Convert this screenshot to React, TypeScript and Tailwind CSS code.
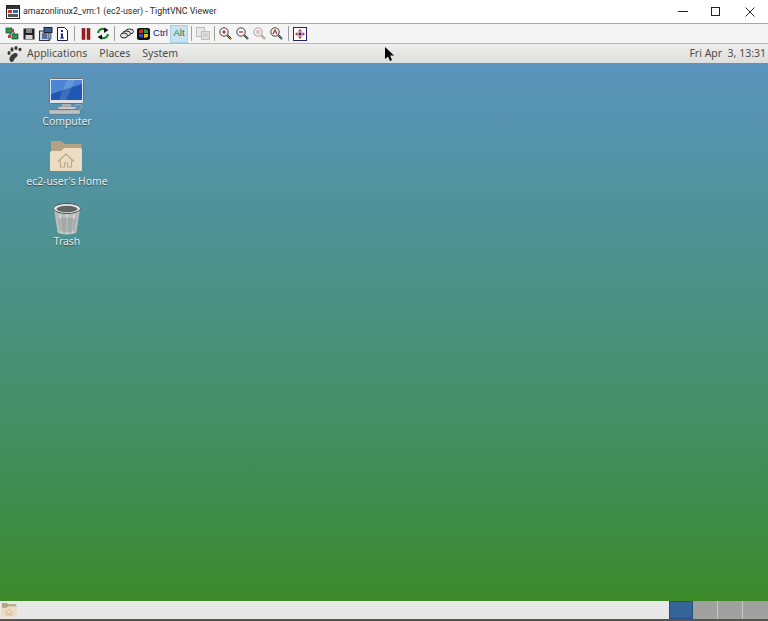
import React from 'react';

const Sep = ({ className = 'mr-[2px]' }: { className?: string }) => (
  <div className={`ml-[3px] h-[15px] w-px bg-[#a0a0a0] ${className}`} />
);

const Tool = ({ children, className = 'w-[17px]' }: { children: React.ReactNode; className?: string }) => (
  <div className={`flex h-[18px] items-center justify-center ${className}`}>{children}</div>
);

const VncIcon = () => (
  <svg width="14" height="14" viewBox="0 0 14 14">
    <rect x="0.5" y="0.5" width="13" height="13" fill="#fff" stroke="#222" />
    <rect x="1" y="1" width="12" height="3" fill="#333" />
    <rect x="2" y="5" width="4" height="3" fill="#c33" />
    <rect x="7" y="5" width="5" height="3" fill="#36a" />
    <rect x="2" y="9" width="10" height="3" fill="#555" />
  </svg>
);

const Connections = () => (
  <svg width="14" height="14" viewBox="0 0 14 14">
    <rect x="1" y="1" width="6" height="5" fill="#2c9a3c" stroke="#145" strokeWidth="0.7" />
    <rect x="7" y="7" width="6" height="5" fill="#2c9a3c" stroke="#145" strokeWidth="0.7" />
    <rect x="6" y="2" width="3" height="3" fill="#d33" />
    <rect x="3" y="8" width="3" height="3" fill="#d33" />
    <path d="M9 5v2M5 6v2" stroke="#222" />
  </svg>
);

const Save = () => (
  <svg width="12" height="12" viewBox="0 0 12 12">
    <rect x="0.5" y="0.5" width="11" height="11" fill="#222" />
    <rect x="3" y="1" width="6" height="4" fill="#888" />
    <rect x="2.5" y="7" width="7" height="4" fill="#d8d8d8" />
  </svg>
);

const Options = () => (
  <svg width="14" height="14" viewBox="0 0 14 14">
    <rect x="0.5" y="4" width="10" height="9.5" fill="#cfd6e2" stroke="#334" />
    <rect x="3" y="6" width="5" height="6" fill="#5a6f9a" />
    <rect x="5" y="0.5" width="8" height="5" fill="#3f5f93" stroke="#223" />
    <rect x="9" y="6" width="3" height="6" fill="#8ea2c4" stroke="#334" strokeWidth="0.6" />
  </svg>
);

const Info = () => (
  <svg width="13" height="14" viewBox="0 0 13 14">
    <path d="M1.5 .5h7l3 3v10h-10z" fill="#fff" stroke="#1a1a40" />
    <rect x="5" y="3" width="2" height="2" fill="#1a2a90" />
    <path d="M4.5 6.5h2.5v4h1v1h-4v-1h1v-3h-.5z" fill="#1a2a90" />
  </svg>
);

const Pause = () => (
  <svg width="10" height="12" viewBox="0 0 10 12">
    <rect x="1" y="0.5" width="3" height="11" fill="#a51d1d" stroke="#5d1010" strokeWidth="0.5" />
    <rect x="6" y="0.5" width="3" height="11" fill="#a51d1d" stroke="#5d1010" strokeWidth="0.5" />
  </svg>
);

const Refresh = () => (
  <svg width="14" height="13" viewBox="0 0 14 13" fill="none">
    <path d="M2 6C2.500 3 5 1.500 8 2l2 1" stroke="#178a2c" strokeWidth="2.200" />
    <path d="M8 .5l4.500 2.500L8 6z" fill="#111" />
    <path d="M12 7c-.5 3-3 4.500-6 4l-2-1" stroke="#178a2c" strokeWidth="2.200" />
    <path d="M6 7.500L1.500 10 6 12.800z" fill="#111" />
  </svg>
);

const CtrlAltDel = () => (
  <svg width="14" height="11" viewBox="0 0 14 11" fill="#e4e4e4" stroke="#222">
    <ellipse cx="9.500" cy="3.500" rx="4" ry="2.500" />
    <ellipse cx="6.500" cy="5.500" rx="4" ry="2.500" />
    <ellipse cx="4" cy="7.500" rx="3.500" ry="2.500" />
  </svg>
);

const WinKey = () => (
  <svg width="13" height="13" viewBox="0 0 13 13">
    <path d="M0 2l2-1h9l2 1v10l-2 1H2l-2-1z" fill="#111" />
    <path d="M2 3l4-1v4H2z" fill="#d52b1e" />
    <path d="M7 2l4 1v3H7z" fill="#1fa23a" />
    <path d="M2 7h4v4l-4-1z" fill="#2a4fd0" />
    <path d="M7 7h4v3l-4 1z" fill="#e8c400" />
  </svg>
);

const Clipboard = () => (
  <svg width="14" height="13" viewBox="0 0 14 13" opacity="0.5">
    <rect x="0.5" y="0.5" width="8" height="9" fill="#ddd" stroke="#888" />
    <rect x="5.500" y="4.500" width="8" height="8" fill="#ccc" stroke="#888" />
    <path d="M7 7h5M7 9h5" stroke="#999" />
  </svg>
);

// the four zoom buttons only differ by what is in the lens
const Zoom = ({ mark, faded }: { mark: string; faded?: boolean }) => (
  <svg width="13" height="13" viewBox="0 0 13 13" opacity={faded ? 0.45 : 1}>
    <path d="M8 8l4 4" stroke="#222" strokeWidth="2" />
    <path d="M8 8l4 4" stroke="#c8a24a" strokeWidth="0.8" />
    <circle cx="5" cy="5" r="4.200" fill="#f3f3f3" stroke="#444" />
    <path d={mark} stroke="#b02a2a" strokeWidth="1.200" fill="none" />
  </svg>
);

const FullScreen = () => (
  <svg width="14" height="14" viewBox="0 0 14 14">
    <rect x="0.5" y="0.5" width="13" height="13" fill="#fff" stroke="#23236b" />
    <path d="M7 2l2 2.500H5zM7 12l2-2.500H5zM2 7l2.500-2v4zM12 7L9.500 5v4z" fill="#c32222" />
    <rect x="5.500" y="5.500" width="3" height="3" fill="#23236b" />
  </svg>
);

const Foot = () => (
  <svg width="15" height="16" viewBox="0 0 15 16" fill="#3a3a38">
    <path d="M4 16c-1.500-1-2-3 -1-5 1-2 3-3.500 5-4 2 0 3 1 2.500 2.500-.5 1.500-2 2-3 3.500-.5 1-1.500 3.500-3.500 3z" />
    <ellipse cx="2" cy="7" rx="1.500" ry="2" />
    <ellipse cx="5" cy="3.500" rx="1.500" ry="2.200" />
    <ellipse cx="9" cy="2" rx="1.600" ry="2" />
    <ellipse cx="13" cy="3.500" rx="1.600" ry="1.800" />
  </svg>
);

const Computer = () => (
  <svg width="38" height="37" viewBox="0 0 38 37">
    <rect x="2.500" y="0.500" width="34" height="25" rx="1" fill="#dfe2e5" stroke="#6c7075" />
    <rect x="4" y="2" width="31" height="20" fill="#1f58b4" />
    <path d="M4 2h31v4L4 16z" fill="#4b85d6" />
    <path d="M20 2h8l-9 20h-7z" fill="#fff" opacity="0.14" />
    <path d="M15 26h9l1 4H14z" fill="#aeb2b6" />
    <rect x="11" y="29" width="18" height="2" fill="#e2e4e6" stroke="#777" strokeWidth="0.5" />
    <rect x="2" y="32" width="31" height="4" rx="0.500" fill="#d6d8da" stroke="#666" strokeWidth="0.6" />
    <path d="M3 34h29" stroke="#777" strokeWidth="0.7" strokeDasharray="1.500 0.700" />
    <path d="M28 27.500c3-1.500 7-1 7 1 0 1.500-2 2-3 3" stroke="#ccc" strokeWidth="0.6" fill="none" />
  </svg>
);

const Folder = ({ size = 34 }: { size?: number }) => (
  <svg width={size} height={size} viewBox="0 0 34 34">
    <path d="M2 3.500C2 2.500 2.500 2 3.500 2h9l3 3h15.500c1 0 1.500.500 1.500 1.500V14H2z" fill="#b5a283" />
    <path d="M1 14c0-1.500 1-2 2-2h9l3-3h16c1.500 0 2 1 2 2v19.500c0 1-.5 1.500-1.500 1.500h-29C1.500 32 1 31.500 1 30.500z" fill="#ecdcc1" />
    <path d="M17 15l-7.500 7h2v6h4v-4h3v4h4v-6h2z" fill="none" stroke="#b9a88b" strokeWidth="1.100" />
  </svg>
);

const Trash = () => (
  <svg width="30" height="33" viewBox="0 0 30 33">
    <path d="M2 7l3.500 23c.2 1.500 4 2.500 9.500 2.500S24.300 31.500 24.500 30L28 7z" fill="#b8bdbb" />
    <path d="M8 12l1.500 19M15 12v20M22 12l-1.500 19" stroke="#dfe3e1" strokeWidth="1.200" />
    <path d="M6 17c6-2 12-2 18 0l-2 12c-4 1.500-10 1.500-14 0z" fill="#8f9694" opacity="0.5" />
    <ellipse cx="15" cy="6.500" rx="13.500" ry="5" fill="#e8ebe9" stroke="#4c5250" />
    <ellipse cx="15" cy="7" rx="10.500" ry="3.200" fill="#5f6664" />
  </svg>
);

const Cursor = () => (
  <svg width="11" height="15" viewBox="0 0 11 15">
    <path d="M1 0v12l3-2.500 2 4.500 2-1-2-4.500h4z" fill="#000" />
  </svg>
);

const DesktopIcon = ({ icon, label }: { icon: React.ReactNode; label: string }) => (
  <div className="flex h-[60px] w-[90px] flex-col items-center">
    <div className="flex h-[39px] items-end">{icon}</div>
    <span className="mt-[-1px] text-[10.400px] leading-[14px] whitespace-nowrap text-[#e6ecec] [text-shadow:0_1px_1px_rgba(0,0,0,0.45)]">
      {label}
    </span>
  </div>
);

const App: React.FC = () => {
  return (
    <div className="relative flex h-[621px] w-[768px] flex-col overflow-hidden bg-white font-['Noto_Sans','DejaVu_Sans',sans-serif]">
      {/* window title bar */}
      <div className="flex h-[24px] items-center border-b border-[#a8a8a8] bg-white pl-[6px]">
        <VncIcon />
        <span className="ml-[3px] font-['Roboto',sans-serif] text-[8.830px] text-[#2a2a2a]">
          amazonlinux2_vm:1 (ec2-user) - TightVNC Viewer
        </span>
        <div className="ml-auto flex items-center">
          <div className="mr-[23px] h-px w-[10px] bg-[#222]" />
          <div className="mr-[25px] h-[9px] w-[9px] border border-[#222]" />
          <svg className="mr-[13px]" width="10" height="10" viewBox="0 0 10 10" stroke="#222" strokeWidth="1">
            <path d="M.5.5l9 9M9.500.5l-9 9" />
          </svg>
        </div>
      </div>

      {/* viewer toolbar */}
      <div className="flex h-[19px] items-center bg-[#f4f4f4] pl-[3px] font-['Liberation_Sans',sans-serif]">
        <Tool><Connections /></Tool>
        <Tool><Save /></Tool>
        <Tool><Options /></Tool>
        <Tool><Info /></Tool>
        <Sep />
        <Tool><Pause /></Tool>
        <Tool><Refresh /></Tool>
        <Sep className="mr-[3px]" />
        <Tool><CtrlAltDel /></Tool>
        <Tool><WinKey /></Tool>
        <Tool className="w-[17px] text-[9.500px] text-[#22227a]">Ctrl</Tool>
        <Tool className="ml-[1px] w-[18px] border border-[#a6cfe8] bg-[#c9e2f2] text-[9.500px] text-[#1f7a3c]">Alt</Tool>
        <Sep />
        <Tool><Clipboard /></Tool>
        <Sep />
        <Tool><Zoom mark="M3 5h4M5 3v4" /></Tool>
        <Tool><Zoom mark="M3 5h4" /></Tool>
        <Tool><Zoom mark="M3 4h4M3 6h4" faded /></Tool>
        <Tool><Zoom mark="M3 7l2-4 2 4" /></Tool>
        <Sep />
        <Tool><FullScreen /></Tool>
      </div>

      {/* gnome top panel */}
      <div className="flex h-[20px] items-center border-t border-[#b8b8b8] bg-gradient-to-b from-[#eeeeec] to-[#dededc] pl-[7px] text-[10.500px] text-[#4c4c4c]">
        <Foot />
        <span className="ml-[5px]">Applications</span>
        <span className="ml-[12px]">Places</span>
        <span className="ml-[12px]">System</span>
        <span className="mr-[2px] ml-auto whitespace-pre">Fri Apr  3, 13:31</span>
      </div>

      {/* desktop */}
      <div className="flex flex-1 flex-col bg-gradient-to-b from-[#5a93bd] to-[#3c8a28] pt-[13px] pl-[22px]">
        <DesktopIcon icon={<div className="mr-[3px]"><Computer /></div>} label="Computer" />
        <DesktopIcon icon={<div className="mr-[2px] mb-[2px]"><Folder /></div>} label="ec2-user's Home" />
        <DesktopIcon icon={<Trash />} label="Trash" />
      </div>

      {/* gnome bottom panel */}
      <div className="flex h-[18px] items-stretch bg-[#e8e8e6]">
        <div className="flex w-[18px] items-center pl-[1px]">
          <Folder size={16} />
        </div>
        <div className="ml-auto flex">
          <div className="w-[24px] border border-[#24507f] bg-[#346498]" />
          <div className="w-[25px] border-r border-[#c8c8c6] bg-[#a0a09e]" />
          <div className="w-[25px] border-r border-[#c8c8c6] bg-[#a0a09e]" />
          <div className="w-[25px] bg-[#a0a09e]" />
        </div>
      </div>
      <div className="h-[2px] bg-[#555]" />

      {/* remote cursor */}
      <div className="absolute top-[47px] left-[384px]">
        <Cursor />
      </div>
    </div>
  );
};

export default App;
